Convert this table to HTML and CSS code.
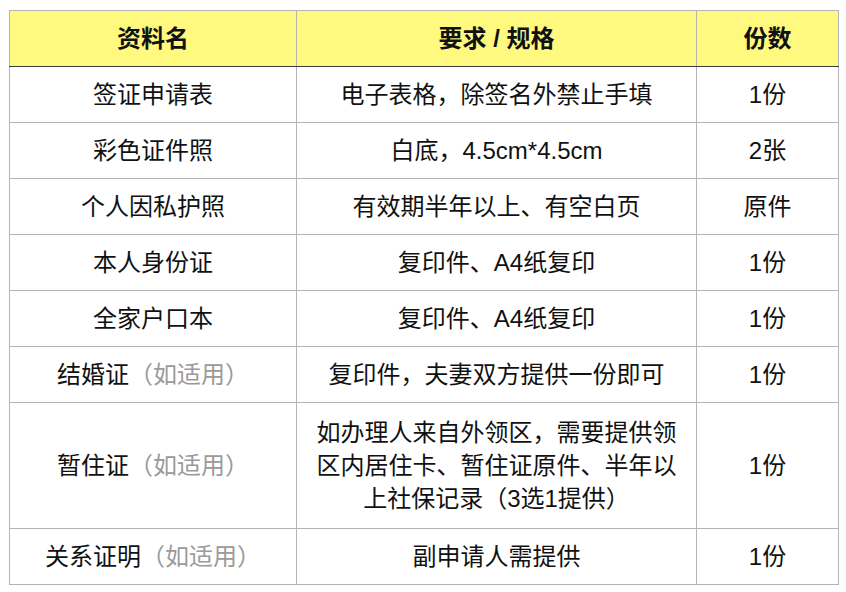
FILE: index.html
```html
<!DOCTYPE html>
<html lang="zh-CN">
<head>
<meta charset="utf-8">
<link rel="stylesheet" href="styles.css">
</head>
<body>
<table class="docs">
  <colgroup>
    <col class="c-name">
    <col class="c-req">
    <col class="c-num">
  </colgroup>
  <thead>
    <tr><th>资料名</th><th>要求 / 规格</th><th>份数</th></tr>
  </thead>
  <tbody>
    <tr><td>签证申请表</td><td>电子表格，除签名外禁止手填</td><td>1份</td></tr>
    <tr><td>彩色证件照</td><td>白底，4.5cm*4.5cm</td><td>2张</td></tr>
    <tr><td>个人因私护照</td><td>有效期半年以上、有空白页</td><td>原件</td></tr>
    <tr><td>本人身份证</td><td>复印件、A4纸复印</td><td>1份</td></tr>
    <tr><td>全家户口本</td><td>复印件、A4纸复印</td><td>1份</td></tr>
    <tr><td>结婚证<span class="note">（如适用）</span></td><td>复印件，夫妻双方提供一份即可</td><td>1份</td></tr>
    <tr class="tall"><td>暂住证<span class="note">（如适用）</span></td><td>如办理人来自外领区，需要提供领区内居住卡、暂住证原件、半年以上社保记录（3选1提供）</td><td>1份</td></tr>
    <tr><td>关系证明<span class="note">（如适用）</span></td><td>副申请人需提供</td><td>1份</td></tr>
  </tbody>
</table>
</body>
</html>
```

FILE: styles.css
```css
html, body {
  margin: 0;
  padding: 0;
  background: #ffffff;
}
body {
  padding: 10px 0 0 9px;
  font-family: "Liberation Sans", "Noto Sans CJK SC", sans-serif;
  color: #111111;
}
.docs {
  border-collapse: collapse;
  table-layout: fixed;
  width: 829px;
}
.c-name { width: 287px; }
.c-req { width: 400px; }
.c-num { width: 142px; }
.docs th,
.docs td {
  border: 1px solid #b4b4b4;
  text-align: center;
  vertical-align: middle;
  font-size: 24px;
  line-height: 33px;
  padding: 11px 12px;
}
.docs th {
  background: #fff97f;
  font-weight: bold;
  border-bottom: 1px solid #3a3a3a;
}
.docs .tall td {
  padding-top: 13px;
  padding-bottom: 13px;
}
.note {
  color: #9a9a9a;
}
```
